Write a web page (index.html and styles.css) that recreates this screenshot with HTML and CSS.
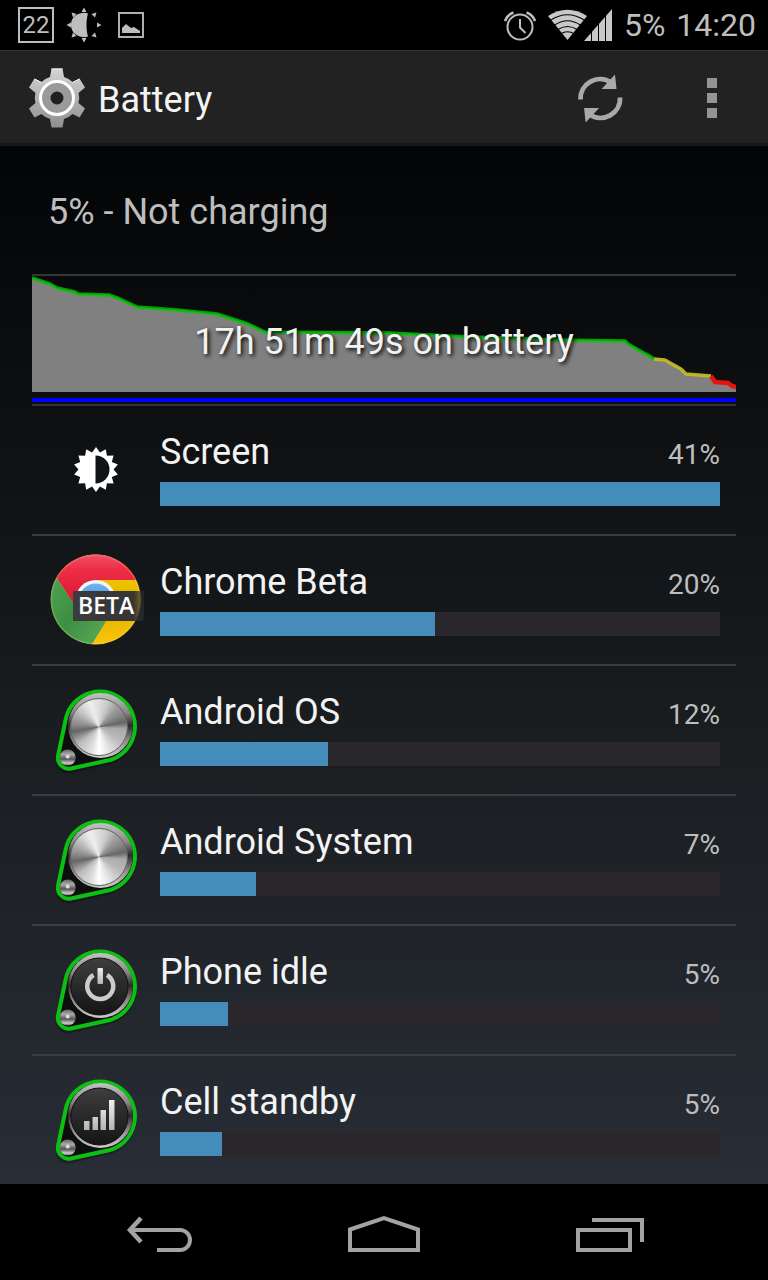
FILE: index.html
```html
<!DOCTYPE html>
<html lang="en">
<head>
<meta charset="utf-8">
<meta name="viewport" content="width=device-width, initial-scale=1">
<title>Battery</title>
<link rel="stylesheet" href="styles.css">
</head>
<body>
<svg class="defs" width="0" height="0" aria-hidden="true">
  <defs>
    <linearGradient id="metal" x1="0" y1="0" x2="0" y2="1">
      <stop offset="0" stop-color="#c4c4c4"/><stop offset=".3" stop-color="#8a8587"/><stop offset=".5" stop-color="#2c2a2b"/><stop offset=".72" stop-color="#8c8688"/><stop offset="1" stop-color="#d0cccd"/>
    </linearGradient>
    <linearGradient id="bead" x1="0" y1="0" x2="0" y2="1">
      <stop offset="0" stop-color="#666"/><stop offset=".3" stop-color="#aaa"/><stop offset=".6" stop-color="#555"/><stop offset=".85" stop-color="#ccc"/><stop offset="1" stop-color="#666"/>
    </linearGradient>
    <linearGradient id="dark" x1="0" y1="0" x2="0" y2="1">
      <stop offset="0" stop-color="#3e3e3e"/><stop offset="1" stop-color="#141414"/>
    </linearGradient>
    <linearGradient id="glyph" x1="0" y1="0" x2="0" y2="1">
      <stop offset="0" stop-color="#f0f0f0"/><stop offset="1" stop-color="#b4b4b4"/>
    </linearGradient>
    <symbol id="holder" viewBox="0 0 96 96">
      <path d="M18 36A35 35 0 1 1 62 78L23 87A10.500 10.500 0 0 1 10 74Z" fill="#000" opacity=".25" transform="translate(0 2)" stroke="#000" stroke-width="4"/>
      <path d="M18 36A35 35 0 1 1 62 78L23 86.500A11 11 0 0 1 10 74Z" fill="#0c0f0d" stroke="#0cc012" stroke-width="4" stroke-linejoin="round"/>
      <circle cx="52.500" cy="43.500" r="32.500" fill="url(#metal)"/>
      <circle cx="19.700" cy="75.500" r="8" fill="url(#bead)"/>
      <circle cx="19.700" cy="74.500" r="2" fill="#ddd"/>
    </symbol>
  </defs>
</svg>

<div class="screen">
  <header class="status">
    <div class="status-left">
      <span class="count">22</span>
      <svg width="36" height="36" viewBox="0 0 36 36" fill="#bebebe" role="img" aria-label="Brightness">
        <path d="M22 6.500C17 4.500 5 7 5 18s12 13.500 17 11.500C20 23 20 13 22 6.500Z"/>
        <path d="M18 .500l2.500 4.500h-5zM18 35.500l2.500-4.500h-5zM.500 18l4.500-2.500v5zM35.500 18l-4.500-2.500v5zM5.500 5.500l5 1.500-3.500 3.500zM30.500 5.500l-5 1.500 3.500 3.500zM5.500 30.500l5-1.500-3.500-3.500zM30.500 30.500l-5-1.500 3.500-3.500z"/>
      </svg>
      <svg class="shot" width="26" height="26" viewBox="0 0 26 26" role="img" aria-label="Screenshot">
        <path d="M1 1h24v24H1z" fill="none" stroke="#b0b0b0" stroke-width="2"/>
        <path d="M4 21v-5l4-4 5 4 3-1 6 4v2z" fill="#bebebe"/>
      </svg>
    </div>
    <div class="status-right">
      <svg width="32" height="32" viewBox="0 0 32 32" fill="none" stroke="#bebebe" role="img" aria-label="Alarm">
        <circle cx="16" cy="18" r="12.500" stroke-width="2"/><path d="M16 10v8.500l5.500 5.500" stroke-width="2"/><path d="M1 12Q3 6 9.500 3.500M31 12Q29 6 22.500 3.500" stroke-width="2.500"/>
      </svg>
      <svg width="66" height="34" viewBox="0 0 66 34" role="img" aria-label="Wi-Fi and signal">
        <path d="M1 8Q20.500-4.500 40 8L20.500 32Z" fill="#c8c8c8"/>
        <path d="M3 12.500Q20.500 1 38 12.500M7 17.500Q20.500 8 34 17.500M10 22Q20.500 15 31 22M13.500 26Q20.500 21.500 27.500 26" fill="none" stroke="#000" stroke-width="1.200"/>
        <path d="M37 33L65 1v32z" fill="#c8c8c8"/>
        <path d="M44.500 0v34M51.500 0v34M58.500 0v34" stroke="#000" stroke-width="1"/>
      </svg>
      <span>5%</span>
      <time>14:20</time>
    </div>
  </header>

  <div class="action-bar">
    <svg width="58" height="62" viewBox="-29 -31 58 62" aria-hidden="true">
      <defs>
        <linearGradient id="gear" gradientUnits="userSpaceOnUse" x1="0" y1="-30" x2="0" y2="30"><stop offset="0" stop-color="#d6d6d6"/><stop offset="1" stop-color="#8e8e8e"/></linearGradient>
      </defs>
      <path fill="url(#gear)" d="M-5.500-29.500H5.500L7-21Q12-19.500 15.500-16L22.500-19.500 28-10.500 21.500-5Q23 0 21.500 5L28 10.500 22.500 19.500 15.500 16Q12 19.500 7 21L5.500 29.500H-5.500L-7 21Q-12 19.500-15.500 16L-22.500 19.500-28 10.500-21.500 5Q-23 0-21.500-5L-28-10.500-22.500-19.500-15.500-16Q-12-19.500-7-21Z"/>
      <path d="M-5.500-29H5.500M22.500-19L15.500-15.500M-15.500-15.500L-22.500-19" stroke="#f2f2f2" fill="none"/>
      <circle r="16.500" fill="#9a9a9a" stroke="#fff" stroke-width="3"/>
      <circle r="6.500" fill="#202020"/>
    </svg>
    <h1>Battery</h1>
    <button class="action" type="button" aria-label="Refresh">
      <svg width="48" height="48" viewBox="0 0 48 48" aria-hidden="true">
        <g id="half"><path d="M4.500 25.500A19.500 19.500 0 0 1 35 8.500" fill="none" stroke="#a9a9a9" stroke-width="4.800"/><path d="M39 .500L40.500 15H25.500z" fill="#a9a9a9"/></g>
        <use href="#half" transform="rotate(180 24.300 24.500)"/>
      </svg>
    </button>
    <button class="action" type="button" aria-label="More options">
      <svg width="10" height="40" viewBox="0 0 10 40" fill="#949494" aria-hidden="true"><path d="M0 0h10v10H0zM0 15h10v10H0zM0 30h10v10H0z"/></svg>
    </button>
  </div>

  <main class="content">
    <p class="state">5% - Not charging</p>
    <section class="history">
      <svg class="chart" viewBox="0 0 704 128" preserveAspectRatio="none" aria-hidden="true">
        <path fill="#808080" d="M0 2 18 8 25 12 43 16 46 18 77 19 88 23 105 31 145 34 185 38 216 48 233 56 358 57 438 61 528 64 593 65 596 68 610 76 616 79 622 83 633 84 640 88 649 93 654 98 679 100 683 106 696 107 700 110 704 111V116H0Z"/>
        <g fill="none" stroke-width="3.500" stroke-linejoin="round">
          <path stroke="#00c800" stroke-opacity=".8" d="M0 2 18 8 25 12 43 16 46 18 77 19 88 23 105 31 145 34 185 38 216 48 233 56 358 57 438 61 528 64 593 65 596 68 610 76 616 79 622 83"/>
          <path stroke="#c8c020" stroke-opacity=".9" d="M622 83 633 84 640 88 649 93 654 98 679 100"/>
          <path stroke="#e81212" stroke-width="4.500" d="M679 100 683 106 696 107 700 110 704 111"/>
        </g>
        <path fill="#00f" d="M0 122h704v4H0z"/>
      </svg>
      <p class="duration">17h 51m 49s on battery</p>
    </section>

    <ul class="usage">
      <li class="row">
        <span class="icon">
          <svg viewBox="0 0 96 96" aria-hidden="true"><g transform="translate(48 47.500)"><path fill="#fff" d="M0-22.500 3.900-17.100 9.800-20.300 10.900-13.700 17.600-14 15.800-7.600 21.900-5 17.500 0 21.900 5 15.800 7.600 17.600 14 10.900 13.700 9.800 20.300 3.900 17.100 0 22.500-3.900 17.100-9.800 20.300-10.900 13.700-17.600 14-15.800 7.600-21.900 5-17.500 0-21.900-5-15.800-7.600-17.600-14-10.900-13.700-9.800-20.300-3.900-17.100Z"/><path d="M-.500-14A14 14 0 0 1-.500 14Z" fill="#111417"/></g></svg>
        </span>
        <div class="info"><div class="line"><span class="name">Screen</span><span class="pct">41%</span></div><div class="bar"><div class="fill" style="width:100%"></div></div></div>
      </li>
      <li class="row">
        <span class="icon">
          <svg viewBox="0 0 96 96" role="img" aria-label="Chrome Beta">
            <defs>
              <clipPath id="ball"><circle cx="47.700" cy="47.500" r="45"/></clipPath>
              <linearGradient id="red" x1="0" y1="0" x2="0" y2="1"><stop offset="0" stop-color="#f0566a"/><stop offset=".3" stop-color="#ee2d47"/><stop offset="1" stop-color="#d3122e"/></linearGradient>
              <linearGradient id="green" x1="0" y1="0" x2="1" y2="1"><stop offset="0" stop-color="#57a755"/><stop offset=".5" stop-color="#3c8f43"/><stop offset="1" stop-color="#62b35c"/></linearGradient>
              <linearGradient id="yellow" x1="0" y1="0" x2="0" y2="1"><stop offset="0" stop-color="#ffd200"/><stop offset=".6" stop-color="#dfb100"/><stop offset="1" stop-color="#ffc90c"/></linearGradient>
              <linearGradient id="blue" x1="0" y1="0" x2="0" y2="1"><stop offset="0" stop-color="#6fb6ee"/><stop offset="1" stop-color="#2a6fc0"/></linearGradient>
              <linearGradient id="badge"><stop offset="0" stop-color="#3c3c3c"/><stop offset=".85" stop-color="#353535"/><stop offset="1" stop-color="#303030" stop-opacity=".5"/></linearGradient>
            </defs>
            <g clip-path="url(#ball)">
              <path d="M0 0h96v96H0z" fill="url(#yellow)"/>
              <path d="M0 10 9.300 26.500 30 58 65 58 43.500 93 43 96H0Z" fill="url(#green)"/>
              <path d="M0 10 9.300 26.500 30 58 48 28H96V0H0Z" fill="url(#red)"/>
              <circle cx="47.700" cy="47.500" r="44.300" fill="none" stroke="#fff" stroke-opacity=".15" stroke-width="1.500"/>
            </g>
            <circle cx="47.700" cy="48" r="20" fill="#f5f5f5"/><circle cx="47.700" cy="48" r="16.500" fill="url(#blue)"/>
            <path d="M25 39h71v30H25z" fill="url(#badge)"/>
            <text class="beta" x="30" y="62">BETA</text>
          </svg>
        </span>
        <div class="info"><div class="line"><span class="name">Chrome Beta</span><span class="pct">20%</span></div><div class="bar"><div class="fill" style="width:49.100%"></div></div></div>
      </li>
      <li class="row">
        <span class="icon"><svg viewBox="0 0 96 96" aria-hidden="true"><use href="#holder"/></svg><span class="disc"></span></span>
        <div class="info"><div class="line"><span class="name">Android OS</span><span class="pct">12%</span></div><div class="bar"><div class="fill" style="width:30%"></div></div></div>
      </li>
      <li class="row">
        <span class="icon"><svg viewBox="0 0 96 96" aria-hidden="true"><use href="#holder"/></svg><span class="disc"></span></span>
        <div class="info"><div class="line"><span class="name">Android System</span><span class="pct">7%</span></div><div class="bar"><div class="fill" style="width:17.100%"></div></div></div>
      </li>
      <li class="row">
        <span class="icon"><svg viewBox="0 0 96 96" aria-hidden="true"><use href="#holder"/><circle cx="51.500" cy="44.500" r="28.500" fill="url(#dark)" stroke="#111"/><path d="M45.500 33A13 13 0 1 0 59 33" fill="none" stroke="#ccc" stroke-width="4.500"/><rect x="49.500" y="26" width="5.500" height="16" rx="1" fill="url(#glyph)"/></svg></span>
        <div class="info"><div class="line"><span class="name">Phone idle</span><span class="pct">5%</span></div><div class="bar"><div class="fill" style="width:12.100%"></div></div></div>
      </li>
      <li class="row">
        <span class="icon"><svg viewBox="0 0 96 96" aria-hidden="true"><use href="#holder"/><circle cx="51.500" cy="44.500" r="28.500" fill="url(#dark)" stroke="#111"/><path d="M36 49h5.500v9H36zM44.500 45h5.500v13h-5.500zM52.500 38h5.500v20h-5.500zM61 28h5.500v30H61z" fill="url(#glyph)"/></svg></span>
        <div class="info"><div class="line"><span class="name">Cell standby</span><span class="pct">5%</span></div><div class="bar"><div class="fill" style="width:11.100%"></div></div></div>
      </li>
    </ul>
  </main>

  <nav class="nav" aria-label="System">
    <button type="button" aria-label="Back"><svg width="68" height="40" viewBox="0 0 68 40" fill="none" stroke="#a3a3a3" stroke-width="4" aria-hidden="true"><path d="M4 16H54A10 10 0 0 1 54 36H31"/><path d="M15 4 4 16 15 28" stroke-width="4.500"/></svg></button>
    <button type="button" aria-label="Home"><svg width="72" height="40" viewBox="0 0 72 40" fill="none" stroke="#a3a3a3" stroke-width="4" aria-hidden="true"><path d="M2 15.500 36 4 70 15.500V36H2Z"/></svg></button>
    <button type="button" aria-label="Recent apps"><svg width="72" height="40" viewBox="-4 -4 72 40" fill="none" stroke="#a3a3a3" stroke-width="4" aria-hidden="true"><path d="M2 12h52v20H2zM16 2h50v22"/></svg></button>
  </nav>
</div>
</body>
</html>
```
FILE: styles.css
```css
* { box-sizing: border-box; }

body {
  margin: 0;
  background: #000;
  color: #f3f3f3;
  font-family: Roboto, "Liberation Sans", sans-serif;
}

h1, p, ul { margin: 0; padding: 0; font-weight: 400; }
svg { display: block; flex: none; }
.defs { position: absolute; }

button {
  display: flex;
  align-items: center;
  justify-content: center;
  padding: 0;
  border: 0;
  background: none;
}

.screen {
  display: flex;
  flex-direction: column;
  min-height: 100vh;
}

.status {
  display: flex;
  align-items: center;
  justify-content: space-between;
  height: 50px;
  padding: 0 12px 0 18px;
  color: #bebebe;
  font-size: 32px;
}

.status-left { display: flex; align-items: center; gap: 12px; }
.status-right { display: flex; align-items: center; gap: 11px; }
.shot { margin-left: 4px; }

.count {
  width: 36px;
  height: 36px;
  border: 2px solid #bebebe;
  font-size: 24px;
  line-height: 32px;
  text-align: center;
}

.action-bar {
  display: flex;
  align-items: center;
  height: 96px;
  padding: 2px 0 0 28px;
  border-top: 1px solid #333;
  border-bottom: 3px solid #151718;
  background: #222;
}

.action-bar h1 {
  flex: 1;
  padding: 4px 0 0 12px;
  font-size: 36px;
  line-height: 42px;
}

.action { width: 112px; height: 90px; }

.content {
  flex: 1;
  padding: 0 32px;
  background: linear-gradient(#030405, #0d0f11 25%, #1a1e21 58%, #282d36);
}

.state {
  padding: 45px 16px 41px;
  border-bottom: 2px solid #333637;
  color: #bebebe;
  font-size: 36px;
  line-height: 42px;
}

.history {
  display: grid;
  align-items: center;
  border-bottom: 2px solid #333637;
}

.history > * { grid-area: 1 / 1; }
.chart { width: 100%; height: 128px; }

.duration {
  padding-top: 4px;
  font-size: 36px;
  line-height: 42px;
  text-align: center;
  text-shadow: 2px 2px 4px #000;
}

.usage { list-style: none; }

.row {
  display: flex;
  gap: 16px;
  padding: 0 16px;
  border-bottom: 2px solid #3a3d3f;
}

.row:last-child { border-bottom: 0; }

.icon {
  display: grid;
  flex: none;
  width: 96px;
  height: 96px;
  margin: 16px 0;
}

.icon > * { grid-area: 1 / 1; }

.disc {
  width: 58px;
  height: 58px;
  margin: 16px 0 0 22px;
  border: 1px solid #666;
  border-radius: 50%;
  background: conic-gradient(#ddd, #c8c8c8 20deg, #999 45deg, #888 60deg, #666 80deg, #aaa 95deg, #bbb 125deg, #eee 165deg, #fff 180deg, #ddd 200deg, #bbb 230deg, #666 260deg, #888 275deg, #aaa 295deg, #ddd 325deg, #eee 340deg, #ddd);
}

.beta {
  fill: #fff;
  font-family: "Open Sans", "Noto Sans", sans-serif;
  font-size: 23px;
  font-weight: 600;
}

.info {
  flex: 1;
  padding: 25px 0 28px;
}

.line {
  display: flex;
  align-items: baseline;
  justify-content: space-between;
  margin-bottom: 9px;
}

.name { font-size: 36px; line-height: 42px; }
.pct { color: #bebebe; font-size: 28px; line-height: 32px; }
.bar { height: 24px; background: #29262c; }
.fill { height: 100%; background: #448cba; }

.nav {
  display: grid;
  grid-template-columns: repeat(3, 1fr);
  height: 96px;
  padding: 4px 48px 0;
}
```
